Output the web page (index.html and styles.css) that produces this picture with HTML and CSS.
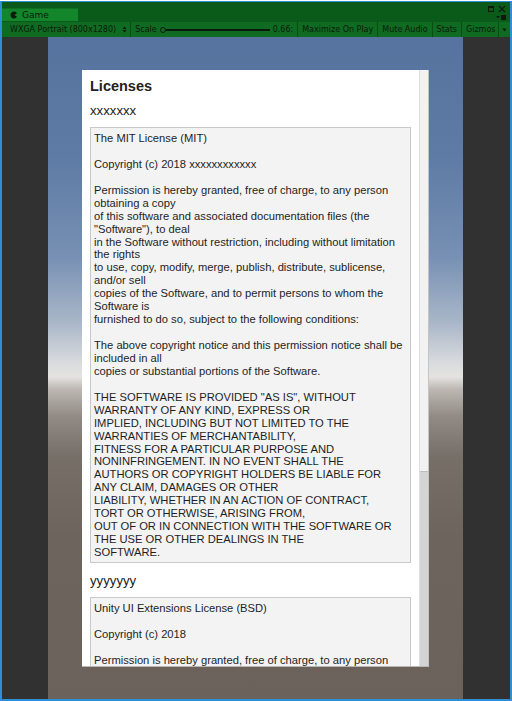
FILE: index.html
```html
<!DOCTYPE html>
<html>
<head>
<meta charset="utf-8">
<link rel="stylesheet" href="styles.css">
</head>
<body>
<div class="window">
  <div class="titlebar">
    <div class="tab">
      <svg class="tab-icon" width="8" height="8" viewBox="0 0 8 8"><path d="M7 2.2 A3.5 3.5 0 1 0 7 5.8 L4.4 4 Z" fill="#0b1a0d"/></svg>
      <span>Game</span>
    </div>
    <div class="winctl">
      <div class="winctl-top">
        <svg width="6" height="6" viewBox="0 0 6 6"><rect x="0.5" y="0.5" width="5" height="5" fill="none" stroke="#0b1a0d"/><rect x="0.5" y="0.5" width="5" height="1.5" fill="#0b1a0d"/></svg>
        <svg width="8" height="8" viewBox="0 0 8 8"><path d="M1 1 L7 7 M7 1 L1 7" stroke="#0b1a0d" stroke-width="1.2"/></svg>
      </div>
      <div class="winctl-bottom">
        <svg width="10" height="5" viewBox="0 0 10 5"><path d="M0 1 L4 1 L2 3.5 Z" fill="#0b1a0d"/><rect x="5" y="0" width="5" height="5" fill="#0b1a0d"/></svg>
      </div>
    </div>
  </div>
  <div class="toolbar">
    <div class="tb-item tb-res">
      <span>WXGA Portrait (800x1280)</span>
      <svg width="5" height="7" viewBox="0 0 5 7"><path d="M0.5 3 L2.5 0.5 L4.5 3 Z M0.5 4 L2.5 6.5 L4.5 4 Z" fill="#0b1a0d"/></svg>
    </div>
    <div class="tb-item tb-scale">
      <span>Scale</span>
      <div class="slider"><div class="knob"></div><div class="track"></div></div>
      <span>0.66:</span>
    </div>
    <div class="tb-item">Maximize On Play</div>
    <div class="tb-item">Mute Audio</div>
    <div class="tb-item">Stats</div>
    <div class="tb-item tb-gizmos">Gizmos</div>
    <div class="tb-item tb-arrow">
      <svg width="5" height="4" viewBox="0 0 5 4"><path d="M0.5 0.5 L4.5 0.5 L2.5 3.5 Z" fill="#0b1a0d"/></svg>
    </div>
  </div>
  <div class="view">
    <div class="side"></div>
    <div class="game">
      <div class="panel">
        <div class="content">
          <div class="title">Licenses</div>
          <div class="name">xxxxxxx</div>
          <div class="box">The MIT License (MIT)

Copyright (c) 2018 xxxxxxxxxxxx

Permission is hereby granted, free of charge, to any person
obtaining a copy
of this software and associated documentation files (the
"Software"), to deal
in the Software without restriction, including without limitation
the rights
to use, copy, modify, merge, publish, distribute, sublicense,
and/or sell
copies of the Software, and to permit persons to whom the
Software is
furnished to do so, subject to the following conditions:

The above copyright notice and this permission notice shall be
included in all
copies or substantial portions of the Software.

THE SOFTWARE IS PROVIDED "AS IS", WITHOUT
WARRANTY OF ANY KIND, EXPRESS OR
IMPLIED, INCLUDING BUT NOT LIMITED TO THE
WARRANTIES OF MERCHANTABILITY,
FITNESS FOR A PARTICULAR PURPOSE AND
NONINFRINGEMENT. IN NO EVENT SHALL THE
AUTHORS OR COPYRIGHT HOLDERS BE LIABLE FOR
ANY CLAIM, DAMAGES OR OTHER
LIABILITY, WHETHER IN AN ACTION OF CONTRACT,
TORT OR OTHERWISE, ARISING FROM,
OUT OF OR IN CONNECTION WITH THE SOFTWARE OR
THE USE OR OTHER DEALINGS IN THE
SOFTWARE.</div>
          <div class="name name-2">yyyyyyy</div>
          <div class="box">Unity UI Extensions License (BSD)

Copyright (c) 2018

Permission is hereby granted, free of charge, to any person</div>
        </div>
        <div class="scrollbar"><div class="thumb"></div></div>
      </div>
    </div>
    <div class="side side-right"></div>
  </div>
</div>
</body>
</html>
```
FILE: styles.css
```css
html, body {
  margin: 0;
  padding: 0;
  background: #ffffff;
}
body {
  padding-top: 1px;
  width: 512px;
  height: 700px;
  overflow: hidden;
}
.window {
  width: 508px;
  height: 697px;
  border: 2px solid #2f8fd6;
  border-top-width: 1px;
  display: flex;
  flex-direction: column;
  font-family: "DejaVu Sans", sans-serif;
  color: #0b1a0d;
}
.titlebar {
  height: 19px;
  background: #0a5b1a;
  display: flex;
  align-items: flex-end;
  justify-content: space-between;
}
.tab {
  width: 76px;
  height: 13px;
  background: #13852b;
  border-top: 1px solid #0f7024;
  display: flex;
  align-items: center;
  gap: 4px;
  padding-left: 8px;
  box-sizing: border-box;
  font-size: 9px;
}
.tab-icon {
  display: block;
}
.winctl {
  display: flex;
  flex-direction: column;
  align-items: flex-end;
  padding-right: 4px;
  height: 19px;
  justify-content: space-between;
  padding-top: 3px;
  padding-bottom: 1px;
  box-sizing: border-box;
}
.winctl-top {
  display: flex;
  align-items: center;
  gap: 4px;
}
.winctl-top svg, .winctl-bottom svg {
  display: block;
}
.toolbar {
  height: 16px;
  background: #0f6b21;
  border-top: 1px solid #0c5a1b;
  box-sizing: border-box;
  display: flex;
  align-items: stretch;
  font-size: 8px;
  line-height: 15px;
  white-space: nowrap;
}
.tb-item {
  display: flex;
  align-items: center;
  gap: 4px;
  padding: 0 4px;
  border-right: 1px solid #0a4c16;
}
.tb-res {
  padding-left: 8px;
  padding-right: 3px;
  gap: 6px;
}
.tb-scale {
  gap: 3px;
}
.slider {
  width: 110px;
  height: 8px;
  display: flex;
  align-items: center;
}
.knob {
  width: 6px;
  height: 6px;
  border: 1px solid #0b1a0d;
  border-radius: 50%;
  box-sizing: border-box;
  flex: none;
}
.track {
  flex: 1;
  height: 2px;
  background: #0b1a0d;
}
.tb-gizmos {
  padding-right: 3px;
}
.tb-arrow {
  padding: 0 3px;
  border-right: none;
}
.view {
  flex: 1;
  display: flex;
  min-height: 0;
}
.side {
  width: 46px;
  background: #313131;
}
.side-right {
  width: 47px;
}
.game {
  width: 415px;
  padding: 33px 34px;
  box-sizing: border-box;
  background: linear-gradient(to bottom,
    #55739e 0px,
    #5e7ba5 120px,
    #7790b3 220px,
    #a9b6c8 285px,
    #d8dadd 325px,
    #e4e3e1 340px,
    #bdb8b3 352px,
    #918a84 380px,
    #766f68 420px,
    #6c645d 500px,
    #6a625b 662px);
  display: flex;
}
.panel {
  flex: 1;
  background: #ffffff;
  display: flex;
  overflow: hidden;
  box-shadow: 0 1px 0 #b9b6b3;
}
.content {
  flex: 1;
  padding: 7px 8px 0 8px;
  overflow: hidden;
  font-family: "Liberation Sans", Arial, sans-serif;
  color: #222222;
}
.title {
  font-size: 14.5px;
  font-weight: bold;
  line-height: 18px;
}
.name {
  font-size: 13.2px;
  line-height: 15px;
  margin-top: 8px;
  margin-bottom: 9px;
}
.name-2 {
  margin-top: 10px;
}
.box {
  border: 1px solid #c9c9c9;
  background: #f3f3f3;
  padding: 4px 3px 3px 3px;
  font-size: 11.2px;
  line-height: 12.94px;
  white-space: pre;
  color: #1e1e1e;
}
.scrollbar {
  width: 8px;
  border-left: 1px solid #dedede;
  border-right: 1px solid #c4c4c4;
  background: #d4d4d4;
  display: flex;
  flex-direction: column;
}
.thumb {
  height: 401px;
  background: #f2f2f2;
  border-bottom: 1px solid #bdbdbd;
}
```
